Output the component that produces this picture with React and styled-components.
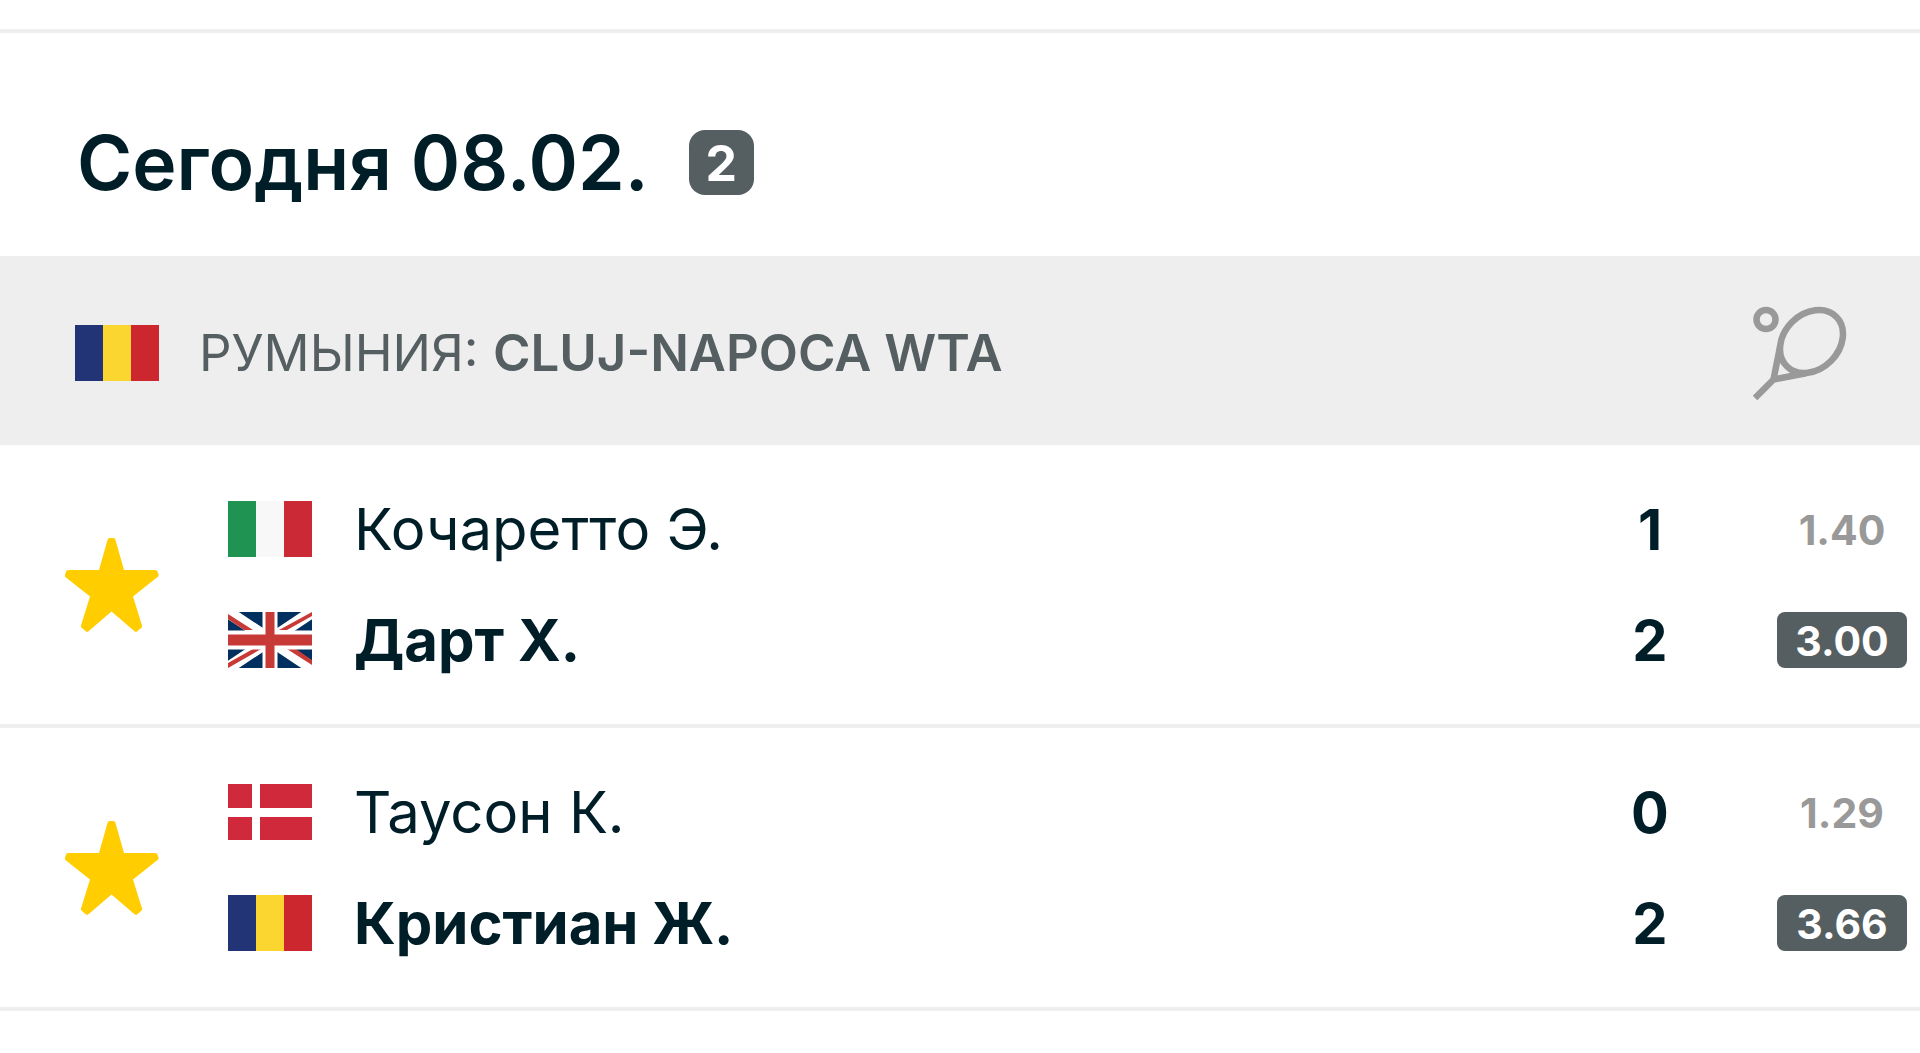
import styled, { createGlobalStyle } from "styled-components";

/* ================= STYLES ================= */

const GlobalStyle = createGlobalStyle`
  * {
    box-sizing: border-box;
  }

  body {
    margin: 0;
    background: #fff;
    color: #001e28;
    font-family: Inter, "Liberation Sans", sans-serif;
  }
`;

const Page = styled.main`
  padding-top: 29px;
`;

const DayHeader = styled.header`
  display: flex;
  align-items: center;
  gap: 40px;
  padding: 97px 77px 61px;
  border-top: 4px solid #eee;
`;

const DayTitle = styled.h1`
  margin: 0;
  font-size: 75px;
  line-height: 62px;
  font-weight: 600;
`;

const Counter = styled.span`
  width: 65px;
  padding-top: 2px;
  border-radius: 16px;
  background: #555e61;
  color: #fff;
  font-size: 50px;
  line-height: 63px;
  font-weight: 700;
  text-align: center;
`;

const LeagueBar = styled.div`
  display: flex;
  align-items: center;
  gap: 40px;
  padding: 50px 73px 45px 75px;
  background: #eee;
  color: #555e61;
`;

const LeagueName = styled.h2`
  flex: 1;
  margin: 0;
  font-size: 51px;
  line-height: 60px;
  font-weight: 400;
  text-transform: uppercase;

  strong {
    font-weight: 600;
  }
`;

const MatchList = styled.ul`
  margin: 0;
  padding: 0;
  list-style: none;
`;

const MatchRow = styled.li`
  display: flex;
  align-items: center;
  padding: 56px 13px 56px 65px;
  border-bottom: 4px solid #eee;
`;

const StarButton = styled.button`
  display: flex;
  margin-right: 69px;
  padding: 0;
  border: 0;
  background: none;
  color: #ffcd00;
  cursor: pointer;
`;

const Column = styled.div`
  display: flex;
  flex-direction: column;
  gap: 55px;
`;

const Players = styled(Column)`
  flex: 1;
`;

const Player = styled.div`
  display: flex;
  align-items: center;
  gap: 42px;
  height: 56px;
  font-size: 58px;
  line-height: 56px;
  font-weight: ${({ $winner }) => ($winner ? 700 : 400)};
`;

const Scores = styled(Column)`
  width: 60px;
  margin-right: 97px;
`;

const Score = styled.span`
  padding-top: 2px;
  font-size: 56px;
  line-height: 54px;
  font-weight: 700;
  text-align: center;
`;

const Odds = styled(Column)`
  width: 130px;
`;

const Odd = styled.span`
  padding-top: 2px;
  border-radius: 8px;
  background: ${({ $winner }) => ($winner ? "#555e61" : "transparent")};
  color: ${({ $winner }) => ($winner ? "#fff" : "#999")};
  font-size: 41px;
  line-height: 54px;
  font-weight: 700;
  text-align: center;
`;

const FlagSvg = styled.svg`
  display: block;
  flex: none;
  width: 84px;
  height: 56px;
`;

const IconSvg = styled.svg`
  display: block;
  flex: none;
  width: 94px;
  height: 94px;
`;

/* ================= ICONS ================= */

const flags = {
  romania: (
    <>
      <path fill="#233476" d="M0 0h28v56H0z" />
      <path fill="#fbd530" d="M28 0h28v56H28z" />
      <path fill="#cc262e" d="M56 0h28v56H56z" />
    </>
  ),
  italy: (
    <>
      <path fill="#1f9352" d="M0 0h28v56H0z" />
      <path fill="#f8f8f8" d="M28 0h28v56H28z" />
      <path fill="#cc2936" d="M56 0h28v56H56z" />
    </>
  ),
  denmark: (
    <>
      <path fill="#d0293c" d="M0 0h84v56H0z" />
      <path fill="#fff" d="M24 0h8v56h-8zM0 24h84v9H0z" />
    </>
  ),
  britain: (
    <>
      <path fill="#00305f" d="M0 0h84v56H0z" />
      <path stroke="#fff" strokeWidth="12" d="M0 0l84 56M84 0L0 56" />
      <path
        fill="#c73a35"
        d="M0 2v5l16 11h9zM84 0v4L59 18h-8zM0 56v-5l25-14h8zM59 37h9l16 11v5z"
      />
      <path fill="#fff" d="M34.500 0h15v56h-15zM0 18.500h84v19H0z" />
      <path fill="#c73a35" d="M37.500 0h9v56h-9zM0 22.500h84v11H0z" />
    </>
  ),
};

function Flag({ country }) {
  return (
    <FlagSvg viewBox="0 0 84 56" aria-hidden="true">
      {flags[country]}
    </FlagSvg>
  );
}

function StarIcon() {
  return (
    <IconSvg viewBox="0 0 94 94" fill="currentColor" aria-hidden="true">
      <path d="M44.500 0h4q1.500 0 2 2L59 32h31q2 0 2.500 1.500l1 3q.500 1.500-1 2.500L68 58.500l9 29q.500 1.500-1 2.500l-4 3.500q-1 .8-2.500-.3L46.500 73.500l-23 19.700q-1.500 1.100-2.500.3L17 90q-1.500-1-1-2.500l9-29L1 39.500q-1.500-1-1-2.500l1-3.500Q1.500 32 3.500 32H34L42.500 2q.5-2 2-2z" />
    </IconSvg>
  );
}

function TennisIcon() {
  return (
    <IconSvg
      viewBox="0 0 94 94"
      fill="none"
      stroke="#999"
      strokeWidth="6.500"
      strokeLinejoin="round"
      aria-hidden="true"
    >
      <circle cx="13" cy="13.500" r="9.500" />
      <ellipse cx="58.500" cy="35.500" rx="35" ry="27.500" transform="rotate(-45 58.500 35.500)" />
      <path d="M27 41l-6.500 32.500L53 67.200M20.500 73.500L2 92" />
    </IconSvg>
  );
}

/* ================= DATA ================= */

const matches = [
  [
    { name: "Кочаретто Э.", country: "italy", score: 1, odd: "1.40" },
    { name: "Дарт Х.", country: "britain", score: 2, odd: "3.00", winner: true },
  ],
  [
    { name: "Таусон К.", country: "denmark", score: 0, odd: "1.29" },
    { name: "Кристиан Ж.", country: "romania", score: 2, odd: "3.66", winner: true },
  ],
];

/* ================= COMPONENT ================= */

export default function App() {
  return (
    <Page>
      <GlobalStyle />
      <DayHeader>
        <DayTitle>Сегодня 08.02.</DayTitle>
        <Counter>{matches.length}</Counter>
      </DayHeader>

      <LeagueBar>
        <Flag country="romania" />
        <LeagueName>
          Румыния: <strong>Cluj-Napoca WTA</strong>
        </LeagueName>
        <TennisIcon />
      </LeagueBar>

      <MatchList>
        {matches.map((players, index) => (
          <MatchRow key={index}>
            <StarButton type="button" aria-pressed="true" aria-label="Избранное">
              <StarIcon />
            </StarButton>
            <Players>
              {players.map((player) => (
                <Player key={player.name} $winner={player.winner}>
                  <Flag country={player.country} />
                  <span>{player.name}</span>
                </Player>
              ))}
            </Players>
            <Scores>
              {players.map((player) => (
                <Score key={player.name}>{player.score}</Score>
              ))}
            </Scores>
            <Odds>
              {players.map((player) => (
                <Odd key={player.name} $winner={player.winner}>
                  {player.odd}
                </Odd>
              ))}
            </Odds>
          </MatchRow>
        ))}
      </MatchList>
    </Page>
  );
}
